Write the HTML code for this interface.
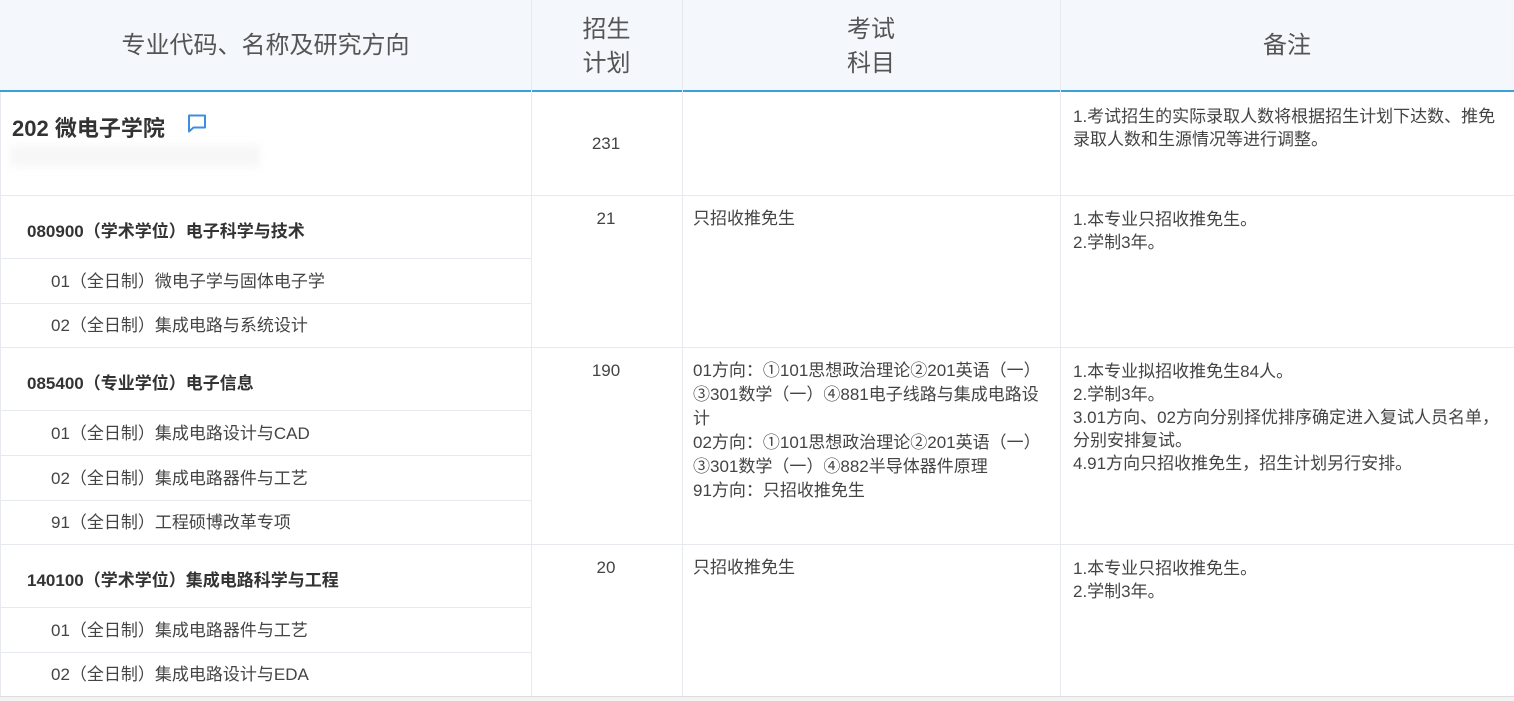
<!DOCTYPE html><html><head><meta charset="utf-8"><style>
body{margin:0;width:1514px;height:701px;background:#fff;position:relative;overflow:hidden;font-family:"Liberation Sans","Noto Sans CJK SC",sans-serif;color:#3a3a3a}
div{position:absolute}
.hd{top:0;height:90px;background:#f4f7fb}
.v{width:1px;background:#e6e9ee}
.h{height:1px;background:#e6e9ee}
.ht{font-size:24px;color:#555;text-align:center;line-height:34px}
.t{font-size:17px;line-height:24px;color:#444;white-space:nowrap}
.b{font-size:17px;font-weight:bold;color:#333;white-space:nowrap}
.c{text-align:center;width:150px;left:531px}
</style></head><body>
<div class="hd" style="left:0;width:1514px"></div>
<div style="left:0;top:90px;width:1514px;height:2px;background:#3ba0d8"></div>
<div class="v" style="left:531px;top:0;height:696px"></div>
<div class="v" style="left:682px;top:0;height:696px"></div>
<div class="v" style="left:1060px;top:0;height:696px"></div>
<div class="v" style="left:0;top:92px;height:604px"></div>
<div class="h" style="left:0;top:696px;width:1514px;background:#ddd"></div>
<div style="left:0;top:697px;width:1514px;height:4px;background:#f2f3f5"></div>
<div class="h" style="left:0;top:195px;width:1514px"></div>
<div class="h" style="left:0;top:347px;width:1514px"></div>
<div class="h" style="left:0;top:544px;width:1514px"></div>
<div class="h" style="left:0;top:258px;width:531px"></div>
<div class="h" style="left:0;top:303px;width:531px"></div>
<div class="h" style="left:0;top:410px;width:531px"></div>
<div class="h" style="left:0;top:455px;width:531px"></div>
<div class="h" style="left:0;top:500px;width:531px"></div>
<div class="h" style="left:0;top:607px;width:531px"></div>
<div class="h" style="left:0;top:652px;width:531px"></div>

<div class="ht" style="left:0;width:531px;top:29px">专业代码、名称及研究方向</div>
<div class="ht" style="left:531px;width:151px;top:13px">招生<br>计划</div>
<div class="ht" style="left:682px;width:378px;top:13px">考试<br>科目</div>
<div class="ht" style="left:1060px;width:454px;top:29px">备注</div>

<div style="left:12px;top:111px;font-size:22px;font-weight:bold;color:#333;white-space:nowrap">202 微电子学院</div>
<svg style="position:absolute;left:186px;top:113px" width="22" height="22" viewBox="0 0 22 22"><path d="M3 2.5h16v12H7.5l-4.5 4z" fill="none" stroke="#3b8fe0" stroke-width="2" stroke-linejoin="round"/></svg>
<div style="left:10px;top:145px;width:250px;height:22px;background:#f7f7f7;filter:blur(4px)"></div>
<div class="t c" style="top:132px">231</div>
<div class="t" style="left:1073px;top:105px;line-height:23px">1.考试招生的实际录取人数将根据招生计划下达数、推免<br>录取人数和生源情况等进行调整。</div>

<div class="b" style="left:27px;top:217px">080900（学术学位）电子科学与技术</div>
<div class="t" style="left:51px;top:270px">01（全日制）微电子学与固体电子学</div>
<div class="t" style="left:51px;top:314px">02（全日制）集成电路与系统设计</div>
<div class="t c" style="top:207px">21</div>
<div class="t" style="left:693px;top:207px">只招收推免生</div>
<div class="t" style="left:1073px;top:208px;line-height:23px">1.本专业只招收推免生。<br>2.学制3年。</div>

<div class="b" style="left:27px;top:369px">085400（专业学位）电子信息</div>
<div class="t" style="left:51px;top:422px">01（全日制）集成电路设计与CAD</div>
<div class="t" style="left:51px;top:467px">02（全日制）集成电路器件与工艺</div>
<div class="t" style="left:51px;top:511px">91（全日制）工程硕博改革专项</div>
<div class="t c" style="top:359px">190</div>
<div class="t" style="left:693px;top:359px">01方向：①101思想政治理论②201英语（一）<br>③301数学（一）④881电子线路与集成电路设<br>计<br>02方向：①101思想政治理论②201英语（一）<br>③301数学（一）④882半导体器件原理<br>91方向：只招收推免生</div>
<div class="t" style="left:1073px;top:360px;line-height:23px">1.本专业拟招收推免生84人。<br>2.学制3年。<br>3.01方向、02方向分别择优排序确定进入复试人员名单，<br>分别安排复试。<br>4.91方向只招收推免生，招生计划另行安排。</div>

<div class="b" style="left:27px;top:566px">140100（学术学位）集成电路科学与工程</div>
<div class="t" style="left:51px;top:619px">01（全日制）集成电路器件与工艺</div>
<div class="t" style="left:51px;top:663px">02（全日制）集成电路设计与EDA</div>
<div class="t c" style="top:556px">20</div>
<div class="t" style="left:693px;top:556px">只招收推免生</div>
<div class="t" style="left:1073px;top:557px;line-height:23px">1.本专业只招收推免生。<br>2.学制3年。</div>
</body></html>
